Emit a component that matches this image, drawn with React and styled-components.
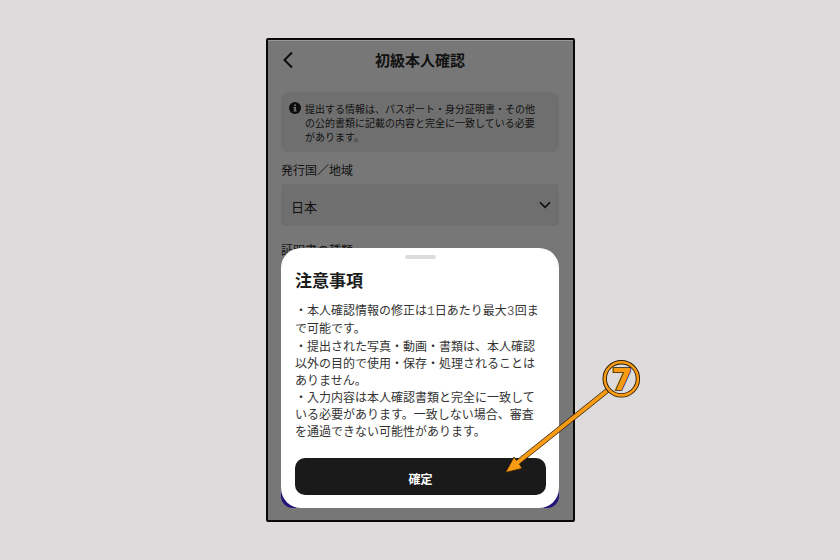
import React from "react";
import styled, { createGlobalStyle } from "styled-components";

const GlobalStyle = createGlobalStyle`
  *, *::before, *::after { box-sizing: border-box; }
  body {
    margin: 0;
    background: #dedbdc;
    font-family: "Noto Sans CJK JP", "Noto Sans", sans-serif;
    color: #111;
  }
  h1, h2, p { margin: 0; }
  button, select { font: inherit; color: inherit; }
`;

const Page = styled.div`
  display: flex;
  justify-content: center;
  min-height: 100vh;
  padding: 38px 0 38px 1px;
`;

const Phone = styled.main`
  position: relative;
  display: flex;
  flex-direction: column;
  width: 100%;
  max-width: 309px;
  padding: 0 14px 12px 13px;
  border: 2px solid #080808;
  border-radius: 2px;
  background: #777;
  box-shadow: inset 0 1px 0 #999;
`;

const Header = styled.header`
  display: grid;
  grid-template-columns: 16px 1fr 16px;
  align-items: center;
  height: 40px;
`;

const BackButton = styled.button`
  display: flex;
  padding: 0;
  border: 0;
  background: none;
`;

const Title = styled.h1`
  font-size: 15px;
  line-height: 20px;
  font-weight: 700;
  text-align: center;
`;

const Notice = styled.section`
  display: flex;
  gap: 4px;
  margin-top: 12px;
  padding: 10px 18px 8px 8px;
  border-radius: 8px;
  background: #6f6f6f;
`;

const NoticeIcon = styled.svg`
  flex: none;
`;

const NoticeText = styled.p`
  font-size: 10px;
  line-height: 14px;
`;

const FieldLabel = styled.label`
  display: block;
  margin-top: ${(p) => (p.$gap === "wide" ? 15 : 9)}px;
  font-size: 12px;
  line-height: 18px;
`;

const SelectWrap = styled.div`
  display: grid;
  align-items: center;
  margin-top: 5px;
  border-radius: 4px;
  background: #6f6f6f;

  > * { grid-area: 1 / 1; }
  > svg { justify-self: end; margin-right: 8px; pointer-events: none; }
`;

const Select = styled.select`
  width: 100%;
  height: 42px;
  padding: 3px 32px 0 10px;
  border: 0;
  background: none;
  appearance: none;
  font-size: 13px;
`;

const NextButton = styled.button`
  height: 38px;
  margin-top: auto;
  border: 0;
  border-radius: 12px;
  background: #20147a;
`;

const Sheet = styled.section`
  position: absolute;
  left: 13px;
  right: 14px;
  bottom: 12px;
  display: flex;
  flex-direction: column;
  padding: 7px 13px 13px 14px;
  border-radius: 20px;
  background: #fff;
`;

const Handle = styled.div`
  align-self: center;
  width: 31px;
  height: 4px;
  border-radius: 2px;
  background: #dcdcdc;
`;

const SheetTitle = styled.h2`
  margin-top: 9px;
  font-size: 17px;
  line-height: 24px;
  font-weight: 700;
  color: #1c1c1c;
`;

const Rules = styled.div`
  margin-top: 9px;
  padding-right: 4px;
  color: #333;
`;

const Rule = styled.p`
  font-size: 12px;
  line-height: ${(p) => (p.$loose ? 18 : 17)}px;
`;

const Digit = styled.span`
  font-family: "Liberation Mono", monospace;
  font-size: 13px;
  line-height: 1;
  color: #666;
`;

const ConfirmButton = styled.button`
  height: 37px;
  margin-top: 19px;
  padding: 3px 0 0;
  border: 0;
  border-radius: 10px;
  background: #1a1a1a;
  color: #fff;
  font-size: 12px;
  font-weight: 700;
`;

const Callout = styled.svg`
  position: absolute;
  left: 234px;
  top: 316px;
  pointer-events: none;

  text {
    font-family: "DejaVu Sans", sans-serif;
    font-size: 30px;
    font-weight: 700;
    paint-order: stroke;
  }
`;

export default function App() {
  return (
    <>
      <GlobalStyle />
      <Page>
        <Phone>
          <Header>
            <BackButton type="button" aria-label="戻る">
              <svg width="14" height="18" viewBox="0 0 14 18" fill="none" stroke="#0c0c0c" strokeWidth="2">
                <path d="M11 1.5 3.5 9l7.5 7.5" />
              </svg>
            </BackButton>
            <Title>初級本人確認</Title>
          </Header>

          <Notice>
            <NoticeIcon width="12" height="12" viewBox="0 0 12 12" aria-hidden="true">
              <circle cx="6" cy="6" r="6" fill="#0c0c0c" />
              <path d="M5.2 2.4h1.8v1.5H5.2zM4.4 5h2.5v3.4h.8v1H4.4v-1h.8V6h-.8z" fill="#777" />
            </NoticeIcon>
            <NoticeText>
              提出する情報は、パスポート・身分証明書・その他の公的書類に記載の内容と完全に一致している必要があります。
            </NoticeText>
          </Notice>

          <FieldLabel htmlFor="country">発行国／地域</FieldLabel>
          <SelectWrap>
            <Select id="country" defaultValue="jp">
              <option value="jp">日本</option>
            </Select>
            <svg width="12" height="8" viewBox="0 0 12 8" fill="none" stroke="#0c0c0c" strokeWidth="1.6" aria-hidden="true">
              <path d="M1 1.3 6 6.3l5-5" />
            </svg>
          </SelectWrap>
          <FieldLabel as="p" $gap="wide">証明書の種類</FieldLabel>
          <NextButton type="button" aria-label="次へ" />

          <Sheet role="dialog" aria-labelledby="sheet-title">
            <Handle />
            <SheetTitle id="sheet-title">注意事項</SheetTitle>
            <Rules>
              <Rule $loose>
                ・本人確認情報の修正は<Digit>1</Digit>日あたり最大<Digit>3</Digit>回まで可能です。
              </Rule>
              <Rule>・提出された写真・動画・書類は、本人確認以外の目的で使用・保存・処理されることはありません。</Rule>
              <Rule>・入力内容は本人確認書類と完全に一致している必要があります。一致しない場合、審査を通過できない可能性があります。</Rule>
            </Rules>
            <ConfirmButton type="button">確定</ConfirmButton>
          </Sheet>

          <Callout width="142" height="122" viewBox="502 356 142 122">
            <path
              d="M606 388.8 516.4 460.4 514 457 505.5 472.5 522.2 468.4 519.4 464 608.6 392.4Z"
              fill="#f79a14"
              stroke="#2a1a05"
              strokeWidth="0.8"
            />
            <circle cx="621.3" cy="378.8" r="16.6" fill="#dedbdc" stroke="#2a1a05" strokeWidth="4.4" />
            <circle cx="621.3" cy="378.8" r="16.6" fill="none" stroke="#f79a14" strokeWidth="2.6" />
            <text x="622" y="390" textAnchor="middle" fill="#f79a14" stroke="#2a1a05" strokeWidth="1.6">7</text>
          </Callout>
        </Phone>
      </Page>
    </>
  );
}
